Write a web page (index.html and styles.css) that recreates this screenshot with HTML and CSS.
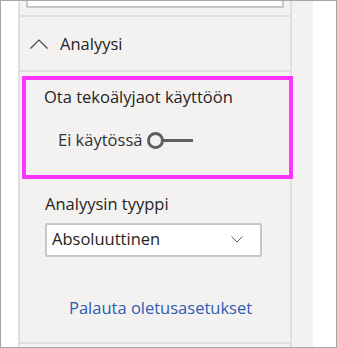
FILE: index.html
```html
<!DOCTYPE html>
<html lang="fi">
<head>
    <meta charset="UTF-8">
    <meta name="viewport" content="width=device-width, initial-scale=1.0">
    <title>Analyysi</title>
    <link rel="stylesheet" href="styles.css">
</head>
<body>
    <div class="frame">
        <div class="panel">
            <div class="pane">
                <div class="input-stub"></div>
                <div class="section-header">
                    <svg class="chevron-up" width="18" height="10" viewBox="0 0 18 10">
                        <polyline points="0.5,9.5 9,1 17.5,9.5" fill="none" stroke="#484644" stroke-width="1.2"/>
                    </svg>
                    <span>Analyysi</span>
                </div>
                <div class="highlight">
                    <div class="title">Ota tekoälyjaot käyttöön</div>
                    <div class="toggle-row">
                        <span>Ei käytössä</span>
                        <svg class="toggle" width="46" height="17" viewBox="0 0 46 17">
                            <circle cx="8.5" cy="8.5" r="7" fill="none" stroke="#605e5c" stroke-width="3"/>
                            <line x1="15.5" y1="8.5" x2="46" y2="8.5" stroke="#605e5c" stroke-width="3"/>
                        </svg>
                    </div>
                </div>
                <div class="field-label">Analyysin tyyppi</div>
                <div class="dropdown">
                    <span>Absoluuttinen</span>
                    <svg width="12" height="7" viewBox="0 0 12 7">
                        <polyline points="0.5,0.5 6,6 11.5,0.5" fill="none" stroke="#605e5c" stroke-width="1"/>
                    </svg>
                </div>
                <a class="reset-link" href="#">Palauta oletusasetukset</a>
                <div class="bottom-line"></div>
            </div>
        </div>
    </div>
</body>
</html>
```

FILE: styles.css
```css
body {
    margin: 0;
    background: #fff;
    font-family: "Open Sans", "Noto Sans", sans-serif;
    font-size: 16.5px;
    line-height: 22px;
    color: #252423;
}
.frame {
    width: 337px;
    height: 348px;
    box-sizing: border-box;
    border: 1px solid #a6a6a6;
    padding-left: 17px;
    display: flex;
    overflow: hidden;
}
.panel {
    width: 295px;
    background: #f3f2f1;
    display: flex;
}
.pane {
    width: 274px;
    box-sizing: border-box;
    border-left: 2px solid #e1dfdd;
    border-right: 2px solid #e1dfdd;
}
.input-stub {
    margin-left: 6px;
    width: 258px;
    height: 7px;
    box-sizing: border-box;
    background: #fff;
    border: 2px solid #c8c6c4;
    border-top: none;
    border-radius: 0 0 2px 2px;
}
.section-header {
    margin-top: 7px;
    height: 57px;
    box-sizing: border-box;
    border-top: 2px solid #e1dfdd;
    border-bottom: 2px solid #e1dfdd;
    display: flex;
    align-items: center;
    gap: 12px;
    padding-left: 10px;
}
.chevron-up {
    display: block;
}
.highlight {
    margin: 4px 0 0 2px;
    width: 271px;
    height: 103px;
    box-sizing: border-box;
    border: 4px solid #ff33ff;
    padding: 6px 0 0 18px;
}
.toggle-row {
    margin-top: 21px;
    padding-left: 14px;
    display: flex;
    align-items: center;
    gap: 5px;
    color: #323130;
}
.toggle {
    display: block;
}
.field-label {
    margin-top: 14px;
    padding-left: 25px;
}
.dropdown {
    margin: 8px 0 0 25px;
    width: 217px;
    height: 34px;
    box-sizing: border-box;
    background: #fff;
    border: 2px solid #c8c6c4;
    border-radius: 2px;
    padding: 0 17px 2px 5px;
    display: flex;
    align-items: center;
    justify-content: space-between;
}
.reset-link {
    display: block;
    margin-top: 40px;
    padding-left: 49px;
    color: #2f5cb0;
    text-decoration: none;
}
.bottom-line {
    margin-top: 23px;
    border-top: 2px solid #e1dfdd;
}
```
